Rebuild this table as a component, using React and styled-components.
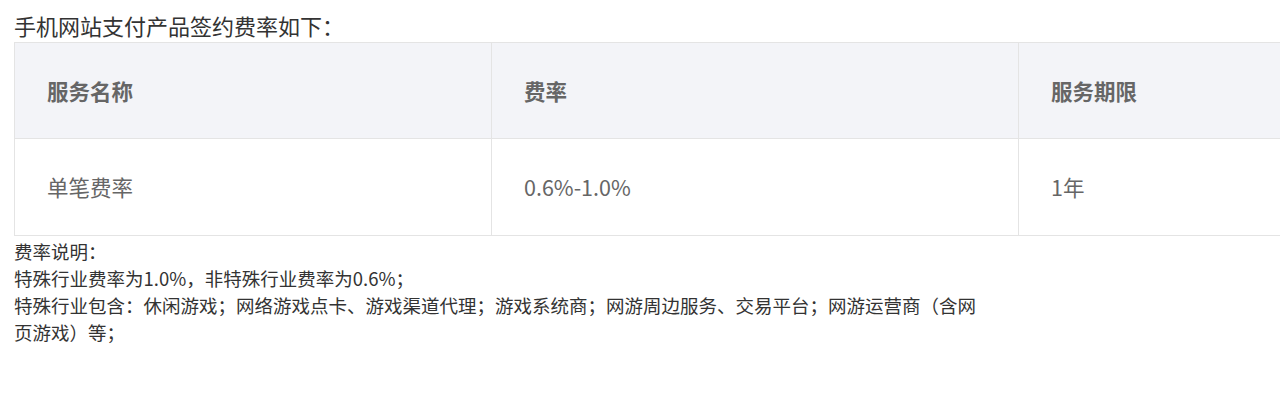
import React from "react";
import styled, { createGlobalStyle } from "styled-components";

const GlobalStyle = createGlobalStyle`
  html, body {
    margin: 0;
    padding: 0;
    background: #fff;
    overflow: hidden;
  }
  body {
    font-family: "Noto Sans CJK SC", "Microsoft YaHei", sans-serif;
  }
`;

const Page = styled.div`
  width: 1280px;
  height: 398px;
  padding: 8px 0 0 14px;
  box-sizing: border-box;
  overflow: hidden;
`;

const Title = styled.div`
  font-size: 22px;
  line-height: 34px;
  color: #333;
`;

const Table = styled.table`
  border-collapse: collapse;
  table-layout: fixed;
  width: 1404px;
`;

const Row = styled.tr`
  background: ${(p) => (p.$head ? "#f3f4f8" : "#fff")};
`;

const Cell = styled.td`
  border: 1px solid #e4e4e4;
  height: ${(p) => (p.$head ? "96px" : "97px")};
  padding: 0 32px;
  box-sizing: border-box;
  font-size: 21.5px;
  line-height: 30px;
  color: #666;
  font-weight: ${(p) => (p.$head ? 700 : 400)};
  vertical-align: middle;
  text-align: left;
`;

const Notes = styled.div`
  width: 975px;
  margin-top: 2px;
  font-size: 18.5px;
  line-height: 27px;
  color: #333;
`;

const cols = [477, 527, 400];

const App = () => {
  return (
    <>
      <GlobalStyle />
      <Page>
        <Title>手机网站支付产品签约费率如下：</Title>
        <Table>
          <colgroup>
            {cols.map((w, i) => (
              <col key={i} style={{ width: w }} />
            ))}
          </colgroup>
          <tbody>
            <Row $head>
              <Cell as="th" $head>服务名称</Cell>
              <Cell as="th" $head>费率</Cell>
              <Cell as="th" $head>服务期限</Cell>
            </Row>
            <Row>
              <Cell>单笔费率</Cell>
              <Cell>0.6%-1.0%</Cell>
              <Cell>1年</Cell>
            </Row>
          </tbody>
        </Table>
        <Notes>
          费率说明：
          <br />
          特殊行业费率为1.0%，非特殊行业费率为0.6%；
          <br />
          特殊行业包含：休闲游戏；网络游戏点卡、游戏渠道代理；游戏系统商；网游周边服务、交易平台；网游运营商（含网页游戏）等；
        </Notes>
      </Page>
    </>
  );
};

export default App;
